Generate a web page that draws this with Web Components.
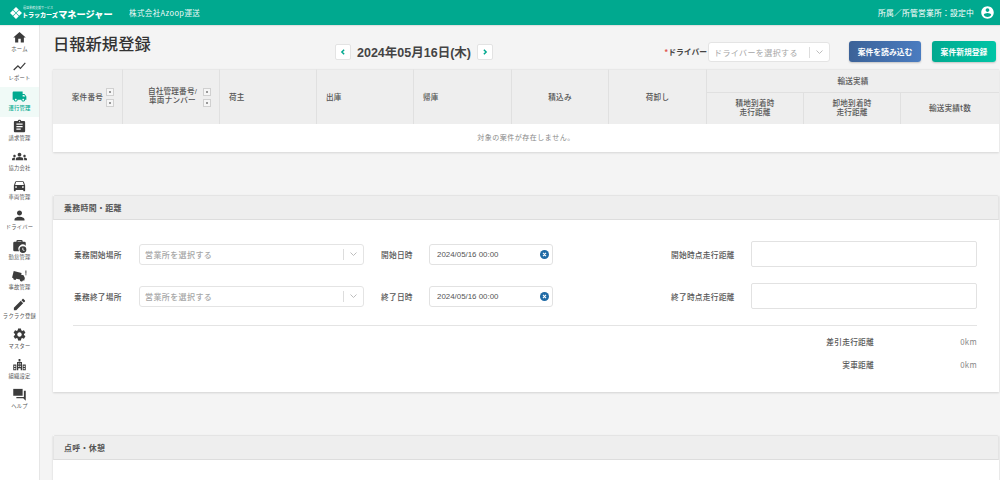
<!DOCTYPE html>
<html lang="ja"><head><meta charset="utf-8"><title>日報新規登録</title>
<style>
html,body{margin:0;height:480px;overflow:hidden;background:#f4f4f4;font-family:"Noto Sans CJK JP","Noto Sans",sans-serif;color:#444}
body{display:flex;flex-direction:column}
.row{display:flex;flex:1;min-height:0}
</style></head><body>
<app-header></app-header>
<div class="row">
<side-nav>
<nav-item label="ホーム" icon="home"></nav-item>
<nav-item label="レポート" icon="chart"></nav-item>
<nav-item label="運行管理" icon="truck" active></nav-item>
<nav-item label="請求管理" icon="bill"></nav-item>
<nav-item label="協力会社" icon="groups"></nav-item>
<nav-item label="車両管理" icon="car"></nav-item>
<nav-item label="ドライバー" icon="person"></nav-item>
<nav-item label="勤怠管理" icon="work"></nav-item>
<nav-item label="事故管理" icon="crash"></nav-item>
<nav-item label="ラクラク登録" icon="edit"></nav-item>
<nav-item label="マスター" icon="gear"></nav-item>
<nav-item label="組織設定" icon="org"></nav-item>
<nav-item label="ヘルプ" icon="forum"></nav-item>
</side-nav>
<main-area>
<title-bar></title-bar>
<report-table></report-table>
<form-panel heading="乗務時間・距離"><duty-form></duty-form></form-panel>
<form-panel heading="点呼・休憩" class="last"></form-panel>
</main-area>
</div>
<script>
const P={
home:'<path d="M10 20v-6h4v6h5v-8h3L12 3 2 12h3v8z"/>',
chart:'<path d="M3.5 18.49l6-6.01 4 4L22 6.92l-1.41-1.41-7.09 7.97-4-4L2 16.99z"/>',
truck:'<path d="M20 8h-3V4H3c-1.1 0-2 .9-2 2v11h2c0 1.66 1.34 3 3 3s3-1.34 3-3h6c0 1.66 1.34 3 3 3s3-1.34 3-3h2v-5l-3-4zM6 18.5c-.83 0-1.5-.67-1.5-1.5s.67-1.5 1.5-1.5 1.5.67 1.5 1.5-.67 1.5-1.5 1.5zm13.5-9l1.96 2.5H17V9.5h2.5zm-1.5 9c-.83 0-1.5-.67-1.5-1.5s.67-1.5 1.5-1.5 1.5.67 1.5 1.5-.67 1.5-1.5 1.5z"/>',
bill:'<path d="M19 3h-4.18C14.4 1.84 13.3 1 12 1c-1.3 0-2.4.84-2.82 2H5c-1.1 0-2 .9-2 2v14c0 1.1.9 2 2 2h14c1.1 0 2-.9 2-2V5c0-1.1-.9-2-2-2zm-7 0c.55 0 1 .45 1 1s-.45 1-1 1-1-.45-1-1 .45-1 1-1zm2 14H7v-2h7v2zm3-4H7v-2h10v2zm0-4H7V7h10v2z"/>',
groups:'<path d="M12 12.75c1.63 0 3.07.39 4.24.9 1.08.48 1.76 1.56 1.76 2.73V18H6v-1.61c0-1.18.68-2.26 1.76-2.73 1.17-.52 2.61-.91 4.24-.91zM4 13c1.1 0 2-.9 2-2s-.9-2-2-2-2 .9-2 2 .9 2 2 2zm1.13 1.1c-.37-.06-.74-.1-1.13-.1-.99 0-1.93.21-2.78.58C.48 14.9 0 15.62 0 16.43V18h4.5v-1.61c0-.83.23-1.61.63-2.29zM20 13c1.1 0 2-.9 2-2s-.9-2-2-2-2 .9-2 2 .9 2 2 2zm4 3.43c0-.81-.48-1.53-1.22-1.85-.85-.37-1.79-.58-2.78-.58-.39 0-.76.04-1.13.1.4.68.63 1.46.63 2.29V18H24v-1.57zM12 6c1.66 0 3 1.34 3 3s-1.34 3-3 3-3-1.34-3-3 1.34-3 3-3z"/>',
car:'<path d="M18.92 6.01C18.72 5.42 18.16 5 17.5 5h-11c-.66 0-1.21.42-1.42 1.01L3 12v8c0 .55.45 1 1 1h1c.55 0 1-.45 1-1v-1h12v1c0 .55.45 1 1 1h1c.55 0 1-.45 1-1v-8l-2.08-5.99zM6.5 16c-.83 0-1.5-.67-1.5-1.5S5.67 13 6.5 13s1.5.67 1.5 1.5S7.33 16 6.5 16zm11 0c-.83 0-1.5-.67-1.5-1.5s.67-1.5 1.5-1.5 1.5.67 1.5 1.5-.67 1.5-1.5 1.5zM5 11l1.5-4.5h11L19 11H5z"/>',
person:'<path d="M12 12c2.21 0 4-1.79 4-4s-1.79-4-4-4-4 1.79-4 4 1.79 4 4 4zm0 2c-2.67 0-8 1.34-8 4v2h16v-2c0-2.66-5.33-4-8-4z"/>',
work:'<path d="M9 3h6a2 2 0 0 1 2 2v1h3a2 2 0 0 1 2 2v4.200A7 7 0 0 0 11.300 21H4a2 2 0 0 1-2-2V8a2 2 0 0 1 2-2h3V5a2 2 0 0 1 2-2zm0 3h6V5H9z"/><path d="M17.500 13a5.500 5.500 0 1 0 0 11 5.500 5.500 0 0 0 0-11zm2 7.800-2.800-1.700V15.500h1.300v3l2.200 1.300z"/>',
crash:'<g transform="rotate(14 11 13)"><path d="M1 7h13v3h4l3 3.500V18h-2a2.500 2.500 0 0 1-5 0H8a2.500 2.500 0 0 1-5 0H1z"/></g><path d="M21.500 4h1.500v5h-1.500zM21.500 10h1.500v1.500h-1.500z"/>',
edit:'<path d="M3 17.25V21h3.75L17.81 9.94l-3.75-3.75L3 17.25zM20.71 7.04c.39-.39.39-1.02 0-1.41l-2.34-2.34c-.39-.39-1.02-.39-1.41 0l-1.83 1.83 3.75 3.75 1.83-1.83z"/>',
gear:'<path d="M19.14 12.94c.04-.3.06-.61.06-.94 0-.32-.02-.64-.07-.94l2.03-1.58c.18-.14.23-.41.12-.61l-1.92-3.32c-.12-.22-.37-.29-.59-.22l-2.39.96c-.5-.38-1.03-.7-1.62-.94l-.36-2.54c-.04-.24-.24-.41-.48-.41h-3.84c-.24 0-.43.17-.47.41l-.36 2.54c-.59.24-1.13.57-1.62.94l-2.39-.96c-.22-.08-.47 0-.59.22L2.74 8.87c-.12.21-.08.47.12.61l2.03 1.58c-.05.3-.09.63-.09.94s.02.64.07.94l-2.03 1.58c-.18.14-.23.41-.12.61l1.92 3.32c.12.22.37.29.59.22l2.39-.96c.5.38 1.03.7 1.62.94l.36 2.54c.05.24.24.41.48.41h3.84c.24 0 .44-.17.47-.41l.36-2.54c.59-.24 1.13-.56 1.62-.94l2.39.96c.22.08.47 0 .59-.22l1.92-3.32c.12-.22.07-.47-.12-.61l-2.01-1.58zM12 15.600c-1.98 0-3.6-1.62-3.6-3.6s1.62-3.6 3.6-3.6 3.6 1.62 3.6 3.6-1.62 3.6-3.6 3.6z"/>',
org:'<path fill-rule="evenodd" d="M8 8h8v13H8zM10 10v2h1.500v-2zM12.500 10v2H14v-2zM10 14v2h1.500v-2zM12.500 14v2H14v-2zM10 18v3h4v-3zM10.500 3h3v4h-3zM2 12h5v9H2zM3.500 14v2h2v-2zM3.500 17.500v2h2v-2zM17 12h5v9h-5zM18.500 14v2h2v-2zM18.500 17.500v2h2v-2z"/>',
forum:'<path d="M2 3h15v11H2z"/><path d="M19 6h3v16l-4-4H7v-2h12z"/>'
};
function def(name,css,html){
  customElements.define(name,class extends HTMLElement{
    connectedCallback(){
      if(this.shadowRoot)return;
      const s=this.attachShadow({mode:'open'});
      s.innerHTML='<style>'+css+'</style>'+(typeof html==='function'?html(this):html);
    }
  });
}
def('app-header',`:host{display:flex;align-items:center;height:25px;background:#00a98f;color:#fff;flex:none;padding:0 5px 0 10px;box-sizing:border-box;box-shadow:0 1px 1px rgba(0,0,0,.08);position:relative;z-index:2}
.logo{display:flex;align-items:center;width:119px;flex:none}
.logo svg{flex:none;width:12px;height:12px}
.lt{display:flex;flex-direction:column;line-height:1;margin-left:0}
.sm{font-size:3px;line-height:3px;opacity:.9;margin-left:1px}
.br{display:flex;align-items:center;font-size:6.100px;line-height:9px;font-weight:900;white-space:nowrap;letter-spacing:-.1px}
.br b{font-size:9.200px;font-weight:900;letter-spacing:0;margin-left:.5px}
.co{font-size:7.500px;letter-spacing:.4px;opacity:.95}
.sp{flex:1}
.st{font-size:7.800px;letter-spacing:.2px;margin-right:6px}
svg.u{width:15px;height:15px;fill:#fff;flex:none}`,
`<div class="logo"><svg viewBox="0 0 12 12"><path fill="#fff" d="M6 0l2.800 2.800L6 5.600 3.200 2.800zM2.800 3.200L5.600 6 2.800 8.800 0 6zM9.200 3.200L12 6 9.200 8.800 6.400 6zM6 6.400l2.800 2.800L6 12 3.200 9.200z"/></svg><div class="lt"><span class="sm">運送業務支援サービス</span><span class="br">トラッカーズ<b>マネージャー</b></span></div></div>
<span class="co">株式会社Azoop運送</span><span class="sp"></span><span class="st">所属／所管営業所：設定中</span>
<svg class="u" viewBox="0 0 24 24"><path d="M12 2C6.48 2 2 6.48 2 12s4.480 10 10 10 10-4.480 10-10S17.520 2 12 2zm0 3c1.660 0 3 1.340 3 3s-1.340 3-3 3-3-1.340-3-3 1.340-3 3-3zm0 14.200c-2.500 0-4.710-1.280-6-3.220.03-1.990 4-3.080 6-3.080 1.990 0 5.970 1.090 6 3.080-1.290 1.940-3.500 3.220-6 3.220z"/></svg>`);
def('side-nav',`:host{display:flex;flex-direction:column;width:40px;flex:none;background:#fff;border-right:1px solid #e6e6e6;box-sizing:border-box;padding-top:2.500px}`,`<slot></slot>`);
def('nav-item',`:host{display:flex;flex-direction:column;align-items:center;height:29.750px;box-sizing:border-box;color:#3c3c3c;padding-top:2px}
:host([active]){background:#f0faf7;color:#00a98f}
svg{width:15px;height:15px;fill:currentColor;flex:none}
span{font-size:5.300px;line-height:7px;letter-spacing:.25px;white-space:nowrap;margin-top:1px;color:#555}
:host([active]) span{color:#00a98f;font-weight:500}`,
h=>`<svg viewBox="0 0 24 24">${P[h.getAttribute('icon')]}</svg><span>${h.getAttribute('label')}</span>`);
def('main-area',`:host{display:block;flex:1;min-width:0;padding:0 1px 0 13px;overflow:hidden}`,`<slot></slot>`);
const btn=`display:inline-flex;align-items:center;justify-content:center;`;
def('title-bar',`:host{display:flex;height:44px;align-items:flex-start;box-sizing:border-box}
h1{margin:7px 0 0;font-size:16.300px;line-height:22px;font-weight:500;color:#333;width:282px;flex:none;white-space:nowrap}
.date{display:flex;align-items:center;margin-top:19px;height:15px;flex:none}
.a{${btn}width:16px;height:16px;background:#fff;border:1px solid #e3e3e3;border-radius:2px;box-sizing:border-box}
.a svg{width:6px;height:6px;fill:none;stroke:#00a98f;stroke-width:2}
.t{font-family:"Liberation Sans","Noto Sans CJK JP",sans-serif;font-weight:700;font-size:12.500px;color:#444;width:126px;text-align:center;white-space:nowrap}
.sp{flex:1}
.l{font-size:7.800px;font-weight:700;color:#444;margin-top:21px;white-space:nowrap}
.l i{color:#e0574f;font-style:normal}
.sel{margin:17px 19px 0 1px}
.b{${btn}height:21px;margin-top:16px;border-radius:3px;color:#fff;font-size:7.800px;font-weight:700;box-shadow:0 1px 2px rgba(0,0,0,.2);white-space:nowrap}
.b1{width:72px;background:linear-gradient(90deg,#3c6298,#4a7cc0);margin-right:11px}
.b2{width:64px;background:linear-gradient(90deg,#00a98f,#00c5a6);margin-right:3px}`,
`<h1>日報新規登録</h1>
<div class="date"><span class="a"><svg viewBox="0 0 8 8"><path d="M5.500 1L2.500 4l3 3"/></svg></span><span class="t">2024年05月16日(木)</span><span class="a"><svg viewBox="0 0 8 8"><path d="M2.500 1l3 3-3 3"/></svg></span></div>
<span class="sp"></span>
<span class="l"><i>*</i>ドライバー</span>
<pick-select class="sel" style="width:122px;height:20px" placeholder="ドライバーを選択する"></pick-select>
<span class="b b1">案件を読み込む</span><span class="b b2">案件新規登録</span>`);
def('pick-select',`:host{display:flex;align-items:center;box-sizing:border-box;background:#fff;border:1px solid #e4e4e4;border-radius:3px;padding-left:5px;font-size:8px;letter-spacing:.4px;color:#a6a6a6;white-space:nowrap}
span{flex:1}
i{width:1px;height:11px;background:#ddd;flex:none}
svg{width:19px;height:10px;fill:none;stroke:#bdbdbd;stroke-width:1;flex:none}`,
h=>`<span>${h.getAttribute('placeholder')}</span><i></i><svg viewBox="0 0 19 10"><path d="M6.500 3.500L9.500 6.500l3-3"/></svg>`);
def('sort-head',`:host{display:flex;flex:1;align-items:center;justify-content:flex-end;gap:3px;height:100%;padding-right:8px;box-sizing:border-box;text-align:center;line-height:8.700px}
.s{display:flex;flex-direction:column;gap:3px;flex:none}
.s b{display:block;width:8px;height:8px;background:#f6f6f6;border:1px solid #d0d0d0;box-sizing:border-box;position:relative}
.s b::after{content:"";position:absolute;left:2px;top:2px;width:2px;height:2px;background:#999}`,
`<span><slot></slot></span><span class="s"><b></b><b></b></span>`);
def('report-table',`:host{display:grid;grid-template-columns:70px 97px 97px 97px 98px 97px 98px 97px 97px 98px;grid-template-rows:24px 31px 28px;background:#fff;box-shadow:0 1px 2px rgba(0,0,0,.12);font-size:7.600px;font-weight:500;color:#555;letter-spacing:.2px}
.h{background:#eee;border-right:1px solid #e0e0e0;border-top:1px solid #e8e8e8;display:flex;align-items:center;justify-content:center;box-sizing:border-box;text-align:center;line-height:8.700px;white-space:nowrap}
.two{font-family:"Liberation Sans","Noto Sans CJK JP",sans-serif}
.r2{grid-row:span 2}
.lf{justify-content:flex-start;padding-left:9px}
.top{grid-column:span 3;border-bottom:1px solid #e0e0e0;border-right:0}
.sub{border-top:0}
.last{border-right:0}
.none{grid-column:1/-1;display:flex;align-items:center;justify-content:center;font-size:7px;font-weight:400;color:#888;letter-spacing:.5px;padding-bottom:2px}`,
`<div class="h r2"><sort-head>案件番号</sort-head></div>
<div class="h r2 two"><sort-head style="gap:6px">自社管理番号/<br>車両ナンバー</sort-head></div>
<div class="h r2 lf">荷主</div><div class="h r2 lf">出庫</div><div class="h r2 lf">帰庫</div>
<div class="h r2">積込み</div><div class="h r2">荷卸し</div>
<div class="h top">輸送実績</div>
<div class="h sub two">積地到着時<br>走行距離</div><div class="h sub two">卸地到着時<br>走行距離</div><div class="h sub last">輸送実績t数</div>
<div class="none">対象の案件が存在しません。</div>`);
def('form-panel',`:host{display:block;margin-top:43px;background:#fff;box-shadow:0 1px 2px rgba(0,0,0,.14)}
:host(.last){height:60px}
.hd{height:25px;box-sizing:border-box;background:#eee;border:1px solid #e4e4e4;border-bottom:1px solid #ddd;display:flex;align-items:center;padding-left:10px;font-size:7.900px;font-weight:700;color:#555;letter-spacing:.35px;border-radius:2px 2px 0 0}`,
h=>`<div class="hd">${h.getAttribute('heading')}</div><slot></slot>`);
def('date-field',`:host{display:flex;align-items:center;box-sizing:border-box;height:21px;width:124px;background:#fff;border:1px solid #e2e2e2;border-radius:3px;padding:0 3px 0 7px;font-family:"Liberation Sans",sans-serif;font-size:7.900px;letter-spacing:0;color:#555;justify-content:space-between}
svg{width:9px;height:9px;flex:none}`,
h=>`<span>${h.getAttribute('value')}</span><svg viewBox="0 0 10 10"><circle cx="5" cy="5" r="5" fill="#1f6aa5"/><path d="M3.300 3.300l3.400 3.400M6.700 3.300l-3.400 3.400" stroke="#fff" stroke-width="1.200"/></svg>`);
def('duty-form',`:host{display:block;padding:21px 22px 0 20px;height:172px;box-sizing:border-box;font-size:7.700px;color:#555;font-weight:500;letter-spacing:.25px}
.g{display:grid;grid-template-columns:65px 225px 17px 48px 124px 118px 80px 226px;grid-auto-rows:26px;row-gap:16px;align-items:center;padding-left:1px}
.g span{white-space:nowrap}
.tx{box-sizing:border-box;height:26px;background:#fff;border:1px solid #e2e2e2;border-radius:2px}
pick-select{height:21px}
hr{border:0;border-top:1px solid #e4e4e4;margin:16px 0 4px}
.res{display:grid;grid-template-columns:1fr 60px 43px;grid-auto-rows:23px;align-items:center;text-align:right}
.res b{font-weight:500}
.res u{grid-column:3;text-decoration:none;color:#888;font-weight:400;letter-spacing:.3px;font-size:7.800px}`,
`<div class="g">
<span>乗務開始場所</span><pick-select placeholder="営業所を選択する"></pick-select><span></span><span>開始日時</span><date-field value="2024/05/16 00:00"></date-field><span></span><span>開始時点走行距離</span><div class="tx"></div>
<span>乗務終了場所</span><pick-select placeholder="営業所を選択する"></pick-select><span></span><span>終了日時</span><date-field value="2024/05/16 00:00"></date-field><span></span><span>終了時点走行距離</span><div class="tx"></div>
</div><hr>
<div class="res"><b>差引走行距離</b><span></span><u>0km</u><b>実車距離</b><span></span><u>0km</u></div>`);
</script>
</body></html>
